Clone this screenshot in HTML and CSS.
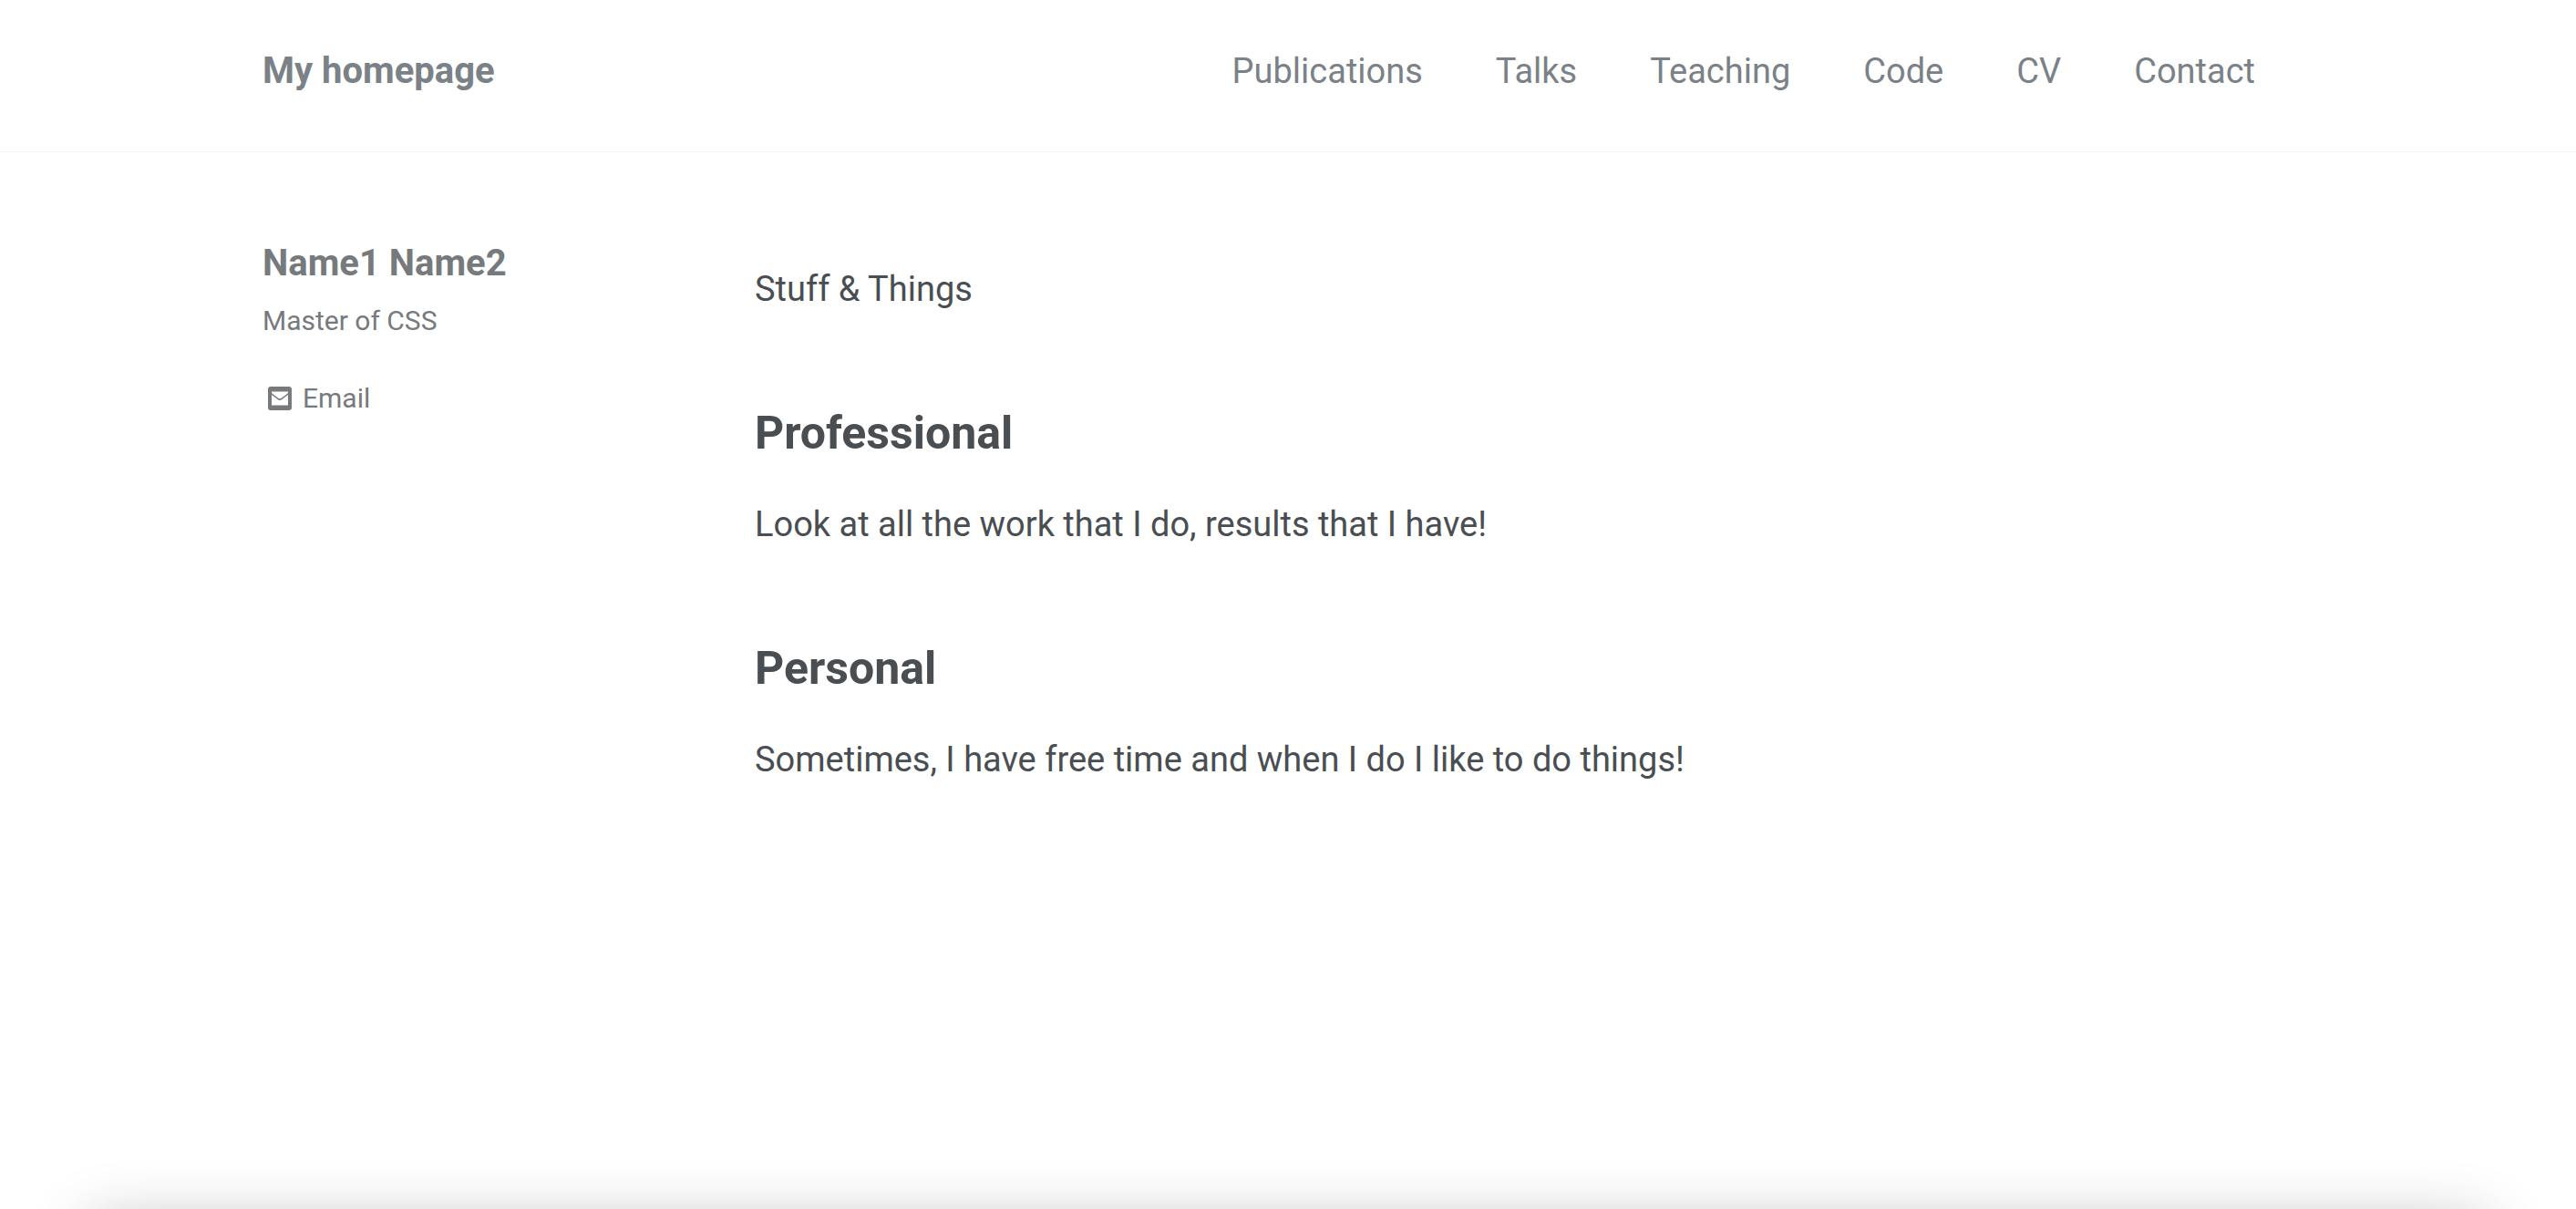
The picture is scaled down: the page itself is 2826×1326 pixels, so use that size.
FILE: index.html
```html
<!DOCTYPE html>
<html lang="en">
<head>
<meta charset="utf-8">
<title>My homepage</title>
<link rel="stylesheet" href="styles.css">
</head>
<body>
<header class="masthead">
  <nav class="masthead-inner" aria-label="Main">
    <a class="site-title" href="#">My homepage</a>
    <ul class="nav-links">
      <li><a href="#">Publications</a></li>
      <li><a href="#">Talks</a></li>
      <li><a href="#">Teaching</a></li>
      <li><a href="#">Code</a></li>
      <li><a href="#">CV</a></li>
      <li><a href="#">Contact</a></li>
    </ul>
  </nav>
</header>
<div class="page">
  <aside class="sidebar">
    <h3 class="author-name">Name1 Name2</h3>
    <p class="author-bio">Master of CSS</p>
    <a class="author-link" href="#">
      <svg class="icon" viewBox="0 0 26 26" aria-hidden="true"><rect width="26" height="26" rx="3" fill="currentColor"/><path fill="#fff" d="M4 5.500h18v1.500c-3 2.500-5 4-7 5.500q-2 1.500-4 0c-2-1.500-4-3-7-5.500zM4 9c3 2.300 4.500 3.500 6.500 4.900q2.500 2 5 0c2-1.400 3.500-2.600 6.500-4.900v11.500H4z"/></svg>
      <span>Email</span>
    </a>
  </aside>
  <main class="content">
    <p>Stuff &amp; Things</p>
    <h2>Professional</h2>
    <p>Look at all the work that I do, results that I have!</p>
    <h2>Personal</h2>
    <p>Sometimes, I have free time and when I do I like to do things!</p>
  </main>
</div>
<div class="bottom-shade"></div>
</body>
</html>
```
FILE: styles.css
```css
* { box-sizing: border-box; }

body {
  margin: 0;
  min-height: 100vh;
  display: flex;
  flex-direction: column;
  background: #fff;
  color: #494e52;
  font: 38px/60px Roboto, "Liberation Sans", sans-serif;
}

a { color: inherit; text-decoration: none; }

.masthead { border-bottom: 1px solid #f2f3f3; }

.masthead-inner {
  display: flex;
  justify-content: space-between;
  padding: 48px 352px 58px 288px;
  color: #7a8288;
}

.site-title {
  font-size: 40px;
  font-weight: 700;
}

.nav-links {
  display: flex;
  gap: 80px;
  margin: 0;
  padding: 0;
  list-style: none;
}

.page {
  display: flex;
  flex: 1;
  padding: 92px 288px 0;
}

.sidebar {
  flex: 0 0 540px;
  color: #777a7d;
}

.author-name {
  margin: 0;
  font-size: 40px;
  line-height: 60px;
}

.author-bio {
  margin: 8px 0 30px;
  font-size: 30px;
  line-height: 50px;
}

.author-link {
  display: inline-flex;
  align-items: center;
  gap: 12px;
  padding-left: 6px;
  font-size: 30px;
  line-height: 50px;
}

.icon { width: 26px; height: 26px; }

.content { flex: 1; padding-top: 28px; }
.content p { margin: 0; }

.content h2 {
  margin: 98px 0 40px;
  font-size: 50px;
  line-height: 60px;
}

/* Zero-height line at the page end; only the shadow's upper edge shows */
.bottom-shade {
  height: 0;
  margin: 0 200px;
  box-shadow: 0 120px 70px 100px rgb(0 0 0 / 30%);
}
```
